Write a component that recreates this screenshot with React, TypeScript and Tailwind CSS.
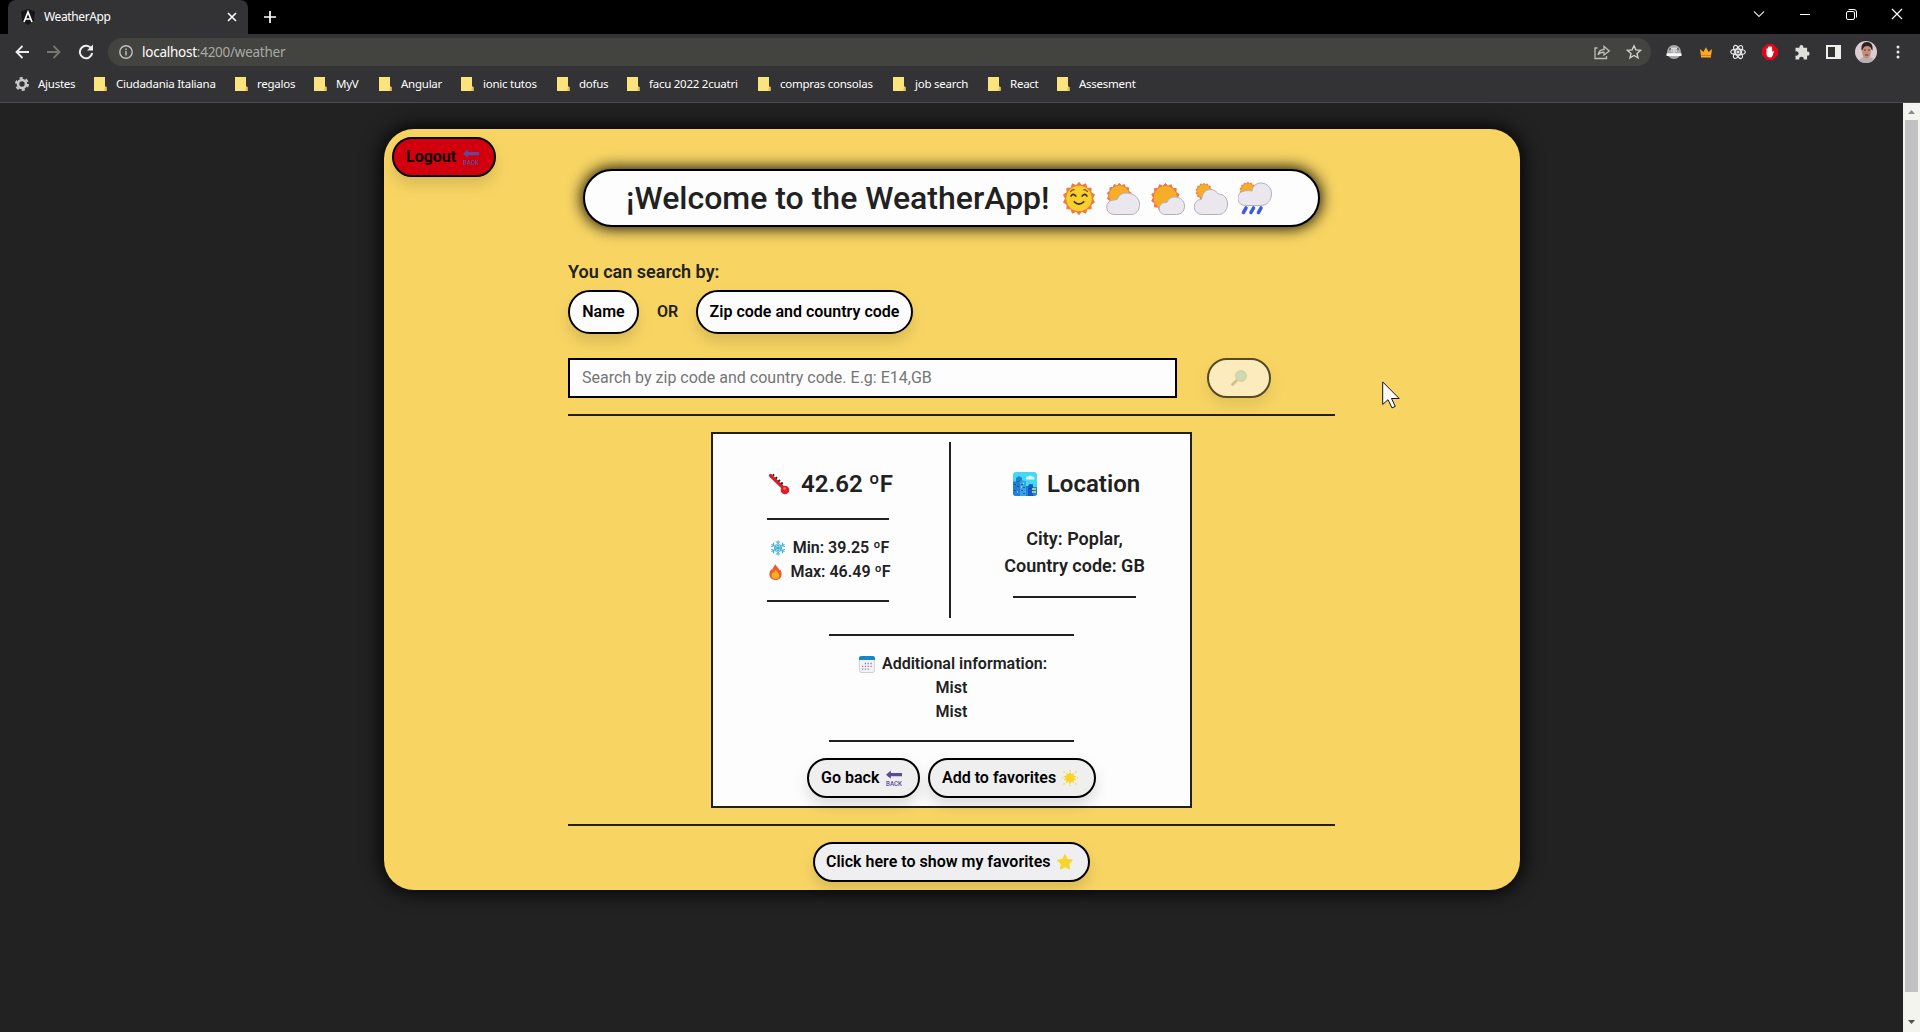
import React from "react";
import type { ReactNode } from "react";

const bookmarks = [
  { name: "Ciudadania Italiana", w: "w-[141px]" },
  { name: "regalos", w: "w-[79px]" },
  { name: "MyV", w: "w-[65px]" },
  { name: "Angular", w: "w-[82px]" },
  { name: "ionic tutos", w: "w-[96px]" },
  { name: "dofus", w: "w-[70px]" },
  { name: "facu 2022 2cuatri", w: "w-[131px]" },
  { name: "compras consolas", w: "w-[135px]" },
  { name: "job search", w: "w-[95px]" },
  { name: "React", w: "w-[69px]" },
  { name: "Assesment", w: "w-[90px]" },
];

const SUN =
  "M16 1l2.6 3 3.6-1.7 1.2 3.8 4 .2-.3 4 3.3 2.2-1.8 3.5 1.8 3.5-3.3 2.2.3 4-4 .2-1.2 3.8-3.6-1.7-2.6 3-2.6-3-3.6 1.7-1.2-3.8-4-.2.3-4L1.600 19.500 3.400 16 1.600 12.500l3.300-2.200-.3-4 4-.2 1.200-3.800L13.400 4z";

function SmilingSun() {
  return (
    <svg viewBox="1 .5 30 31" className="h-[33px] w-[32px]">
      <path d={SUN} fill="#f07a3c" stroke="#f07a3c" strokeLinejoin="round" />
      <circle cx="16" cy="16" r="12" fill="#f8cf2c" />
      <path d="M8.500 13.700q2-3.200 4.500 0M19 13.700q2.500-3.200 4.500 0M11.500 19q4.500 4.500 9 0" fill="none" stroke="#3a2a20" strokeWidth="1.500" strokeLinecap="round" />
      <path d="M8 9.500q1.500-2 3.500-1.800M24 9.500q-1.500-2-3.500-1.800" fill="none" stroke="#7d5518" strokeWidth="1.100" strokeLinecap="round" />
    </svg>
  );
}

function SunCloud({ sun, cloud }: { sun: string; cloud: string }) {
  return (
    <svg viewBox="0 0 34 34" className="h-[34px] w-[34px]">
      <g transform={sun}>
        <path d={SUN} fill="#ec7440" stroke="#ec7440" strokeLinejoin="round" />
        <circle cx="16" cy="16" r="12.300" fill="#f6ae28" />
      </g>
      <path d={cloud} fill="#ebe7ee" stroke="#b5afb8" strokeWidth="1" />
    </svg>
  );
}

function RainCloud() {
  return (
    <svg viewBox="0 0 34 34" className="h-[34px] w-[34px]">
      <g transform="translate(1 .5) scale(.56)">
        <path d={SUN} fill="#ec7440" stroke="#ec7440" strokeLinejoin="round" />
        <circle cx="16" cy="16" r="12.300" fill="#f6ae28" />
      </g>
      <path d="M7.500 24.500a6.500 6.500 0 0 1-1-14.500q4-1 7.500 0C14.500 5.500 18 2 22.800 2c6 0 10.700 4.500 10.700 10.500 0 7-4.700 12-10.700 12z" fill="#ebe7ee" stroke="#b5afb8" />
      <path d="M8 27l-2.500 4.500M15.500 27L13 31.500M23 27l-2.500 4.500" stroke="#3d5ae4" strokeWidth="3.600" strokeLinecap="round" />
    </svg>
  );
}

function BackArrow() {
  return (
    <svg viewBox="0 0 16 16" className="size-4 overflow-visible">
      <path d="M0 4.700L4.800.6v2.500H16v3.200H4.800V8.800z" fill="#5b4b9a" />
      <text x="0" y="15.500" fontSize="6.500" textLength="16" lengthAdjust="spacingAndGlyphs" fontFamily="Roboto" fontWeight="500" fill="#5b4b9a">
        BACK
      </text>
    </svg>
  );
}

function Glyph({ kind }: { kind: string }) {
  switch (kind) {
    case "thermometer":
      return (
        <svg viewBox="0 0 22 22" className="h-[22px] w-[22px]">
          <path d="M2.500 2.500L15.500 15" stroke="#d81f2c" strokeWidth="3.400" strokeLinecap="round" />
          <circle cx="17" cy="17" r="4.300" fill="#e01d2b" />
          <circle cx="16.500" cy="15.500" r="1.300" fill="#f77b7f" />
          <path d="M4.800 2.700l1.300-1.300M7.700 5.500l1.300-1.300M10.500 8.300l1.500-1.500M13.200 11l1.500-1.500" stroke="#272020" strokeWidth="1.800" />
        </svg>
      );
    case "city":
      return (
        <svg viewBox="0 0 24 24" className="size-6">
          <rect width="24" height="24" rx="3" fill="#43d8f5" />
          <path d="M13 6.500q0-2.500 2.500-2 1.500-2 3.500 0 3 0 2.500 3H13z" fill="#dff4fb" />
          <path d="M0 9.500h3V6l3-2 3 2v4h2l2-1v5h3v-2h4v3h4v6q0 3-3 3H3q-3 0-3-3z" fill="#1e80d6" />
          <path d="M7 10l3-2 3 2v14H7z" fill="#3aa2ea" />
          <path d="M15 14l2-2 3 2v10h-5z" fill="#1558c4" />
          <path d="M2 12v1M5 9v1M5 14v1M9 12v1M11 15v1M9 18v1M2 18v1M11 21v1M17 16v1" stroke="#123763" strokeWidth="1.300" />
          <path d="M19 17h4M19 20h4M8 15h1M10 11.500h1M4 20h1" stroke="#d8e86a" strokeWidth="1.400" />
        </svg>
      );
    case "snow":
      return (
        <svg viewBox="0 0 16 16" className="size-4" fill="none" stroke="#3aabd4" strokeWidth="1" strokeLinecap="round">
          {[0, 60, 120, 180, 240, 300].map((a) => (
            <path key={a} transform={`rotate(${a} 8 8)`} d="M8 8V.8M6 1.600L8 3.400l2-1.800M6.600 4.600L8 5.900l1.400-1.300" />
          ))}
        </svg>
      );
    case "fire":
      return (
        <svg viewBox="0 0 13 16" className="h-4 w-[13px]">
          <path d="M6.500.2C7.600 3 9.600 3.600 10.400 6.200l.6-.8C12.300 7 12.800 8.600 12.600 10.700 12.200 14 9.800 16 6.500 16S.5 13.800.4 10.500C.3 8.200 1.200 6.600 2.400 5.200l.7 1C3.500 4 4.900 2.400 6.500.2z" fill="#e5602d" />
          <path d="M6.700 5.800c.6 1.800 3.800 3.500 3.700 6-.2 2.100-1.900 3.300-4 3.300s-3.900-1.200-3.900-3.500c0-1.700 1-2.800 1.800-3.600l.9 1.300c.1-1.500.6-2.700 1.500-3.500z" fill="#fbab25" />
        </svg>
      );
    case "calendar":
      return (
        <svg viewBox="0 0 16 17" className="h-[17px] w-4">
          <rect x=".4" y=".5" width="15.200" height="16" rx="2" fill="#f3f0f6" stroke="#c9c3d2" strokeWidth=".8" />
          <path d="M0 4V2.200Q0 0 2.200 0h11.600Q16 0 16 2.200V4z" fill="#1787cc" />
          <path d="M5.800 7.500H14M3 10.300h11M3 13.100h7" stroke="#8f87a0" strokeWidth="1.300" strokeDasharray="1.300 1.500" />
        </svg>
      );
    case "sparkle":
      return (
        <svg viewBox="0 0 16 16" className="size-4">
          <path d="M8 1.500l1.300 2.700 2.700-1.400-.6 2.800 3.100.6L12.200 8l2.300 1.800-3.100.6.6 2.800-2.700-1.400L8 14.500l-1.300-2.700L4 13.200l.6-2.800-3.100-.6L3.800 8 1.500 6.200l3.100-.6L4 2.800l2.700 1.400z" fill="#fad528" />
          <path d="M8 0v1.200M8 14.800V16M0 8h1.200M14.800 8H16M1.500 1.500l1.200 1.200M13.300 13.300l1.200 1.200M14.500 1.500l-1.200 1.200M2.700 13.300l-1.200 1.200" stroke="#f8d84a" strokeWidth="1.500" />
        </svg>
      );
    case "star":
      return (
        <svg viewBox="0 0 16 16" className="size-4">
          <path d="M8 1.200l2.100 4.400 4.800.6-3.500 3.400.9 4.900L8 12.200l-4.300 2.300.9-4.900L1.100 6.200l4.800-.6z" fill="#f8d52c" stroke="#f8d52c" strokeWidth="1.600" strokeLinejoin="round" />
        </svg>
      );
    default:
      return (
        <svg viewBox="0 0 16 16" className="size-4">
          <path d="M5.500 10.500L1.500 14.500" stroke="#7c7060" strokeWidth="2.800" strokeLinecap="round" />
          <circle cx="10" cy="6" r="5.300" fill="#78c5d2" stroke="#82a89c" strokeWidth="1.300" />
        </svg>
      );
  }
}

function Pill({ className, children }: { className: string; children: ReactNode }) {
  return (
    <button
      className={`flex shrink-0 items-center whitespace-nowrap border-2 border-black text-[16px] font-semibold text-black shadow-[0_8px_15px_rgba(0,0,0,0.13)] ${className}`}
    >
      {children}
    </button>
  );
}

function Rule({ className }: { className: string }) {
  return <div className={`h-[2px] shrink-0 bg-[#212121] ${className}`} />;
}

function TabStrip() {
  return (
    <div className="flex h-[34px] bg-black">
      <div className="ml-[8px] flex h-full w-[240px] items-center rounded-t-[8px] bg-[#333336] pl-[12px] pr-[11px]">
        <svg viewBox="0 0 16 16" className="size-4">
          <path d="M8 0l7 2.500L14 12l-6 4-6-4L1 2.500z" fill="#15151b" />
          <path d="M4 13L8 3l4 10M5.600 10h4.800" fill="none" stroke="#fff" strokeWidth="1.700" />
        </svg>
        <span className="ml-[8px] text-[12px] tracking-[-0.37px] text-white">WeatherApp</span>
        <svg viewBox="0 0 10 10" className="ml-auto size-[10px]" stroke="#fff" strokeWidth="1.600">
          <path d="M1 1l8 8M9 1L1 9" />
        </svg>
      </div>
      <svg viewBox="0 0 12 12" className="ml-[16px] mt-[11px] size-3" stroke="#fff" strokeWidth="1.700">
        <path d="M6 0v12M0 6h12" />
      </svg>
      <div className="ml-auto flex h-[28px] items-center">
        <svg viewBox="0 0 12 8" className="mr-[35px] h-2 w-3" fill="none" stroke="#ddd" strokeWidth="1.100">
          <path d="M1 1.500l5 5 5-5" />
        </svg>
        <div className="mr-[36px] h-px w-[10px] bg-white" />
        <svg viewBox="0 0 11 11" className="mr-[34px] size-[11px]" fill="none" stroke="#fff">
          <rect x=".5" y="2.500" width="8" height="8" rx="1.500" />
          <path d="M2.500.5H8q2.500 0 2.500 2.500v5.500" />
        </svg>
        <svg viewBox="0 0 12 12" className="mr-[17px] size-[12px]" stroke="#fff" strokeWidth="1.200">
          <path d="M1 1l10 10M11 1L1 11" />
        </svg>
      </div>
    </div>
  );
}

function AddressBar() {
  return (
    <div className="flex h-[35px] items-center pt-px">
      <svg viewBox="0 0 14 14" className="ml-[15px] size-[14px]" fill="none" stroke="#eee" strokeWidth="1.800">
        <path d="M14 7H1.500M7.500 1l-6 6 6 6" />
      </svg>
      <svg viewBox="0 0 14 14" className="ml-[18px] size-[14px]" fill="none" stroke="#77776f" strokeWidth="1.800">
        <path d="M0 7h12.500M6.500 1l6 6-6 6" />
      </svg>
      <svg viewBox="0 0 16 16" className="ml-[17px] size-4" fill="none" stroke="#eee" strokeWidth="2">
        <path d="M13.500 5A6.200 6.200 0 1 0 14.200 9" />
        <path d="M15 .5V6.500H9z" fill="#eee" stroke="none" />
      </svg>
      <div className="ml-[14px] flex h-[28px] w-[1543px] items-center rounded-full bg-[#434340] pl-[11px]">
        <svg viewBox="0 0 14 14" className="size-[14px]" fill="none" stroke="#c2c2c2" strokeWidth="1.400">
          <circle cx="7" cy="7" r="6.200" />
          <path d="M7 6v4.500M7 3.400v1.500" />
        </svg>
        <span className="ml-[9px] text-[13.500px] tracking-[-0.25px] text-[#a9a9a7]">
          <span className="text-white">localhost</span>:4200/weather
        </span>
        <svg viewBox="0 0 16 16" className="ml-auto mr-[16px] size-4" fill="none" stroke="#bdbdbd" strokeWidth="1.300">
          <path d="M3.500 4H1v10.500h11.500V12M4 11q1-5.500 6-5.500V2.500L15.200 7 10 11V8.300Q6 8 4 11z" />
        </svg>
        <svg viewBox="0 0 16 16" className="mr-[9px] size-4" fill="none" stroke="#d0d0d0" strokeWidth="1.400">
          <path d="M8 1.800l1.900 4.100 4.500.5-3.400 3 1 4.400-4-2.300-4 2.300 1-4.400-3.400-3 4.500-.5z" />
        </svg>
      </div>
      <div className="ml-[15px] flex items-center">
        <svg viewBox="0 0 16 16" className="size-4">
          <circle cx="8" cy="8" r="7" fill="#a9a9a9" />
          <path d="M5 4.500h6M8 4v5M5 7h1.500M9.500 7H11" stroke="#dcdcdc" strokeWidth="1.500" />
          <path d="M3.500 6l1-2M12.500 6l-1-2" stroke="#55555a" strokeWidth="1.200" />
          <path d="M.5 9.300h15V12H.5z" fill="#fff" />
        </svg>
        <svg viewBox="0 0 14 12" className="ml-[17px] h-3 w-[14px]">
          <path d="M1 3l3.400 3L7 1.200l2.600 4.800 3.400-3-1.200 8.500H2.200z" fill="#fbac1c" />
          <path d="M2 9.500h10" stroke="#e8762a" />
        </svg>
        <svg viewBox="0 0 16 16" className="ml-[17px] size-4" fill="none" stroke="#e8e8e8" strokeWidth="1.200">
          <ellipse cx="8" cy="8" rx="7.300" ry="2.800" />
          <ellipse cx="8" cy="8" rx="7.300" ry="2.800" transform="rotate(60 8 8)" />
          <ellipse cx="8" cy="8" rx="7.300" ry="2.800" transform="rotate(120 8 8)" />
          <circle cx="8" cy="8" r="1" fill="#fff" />
        </svg>
        <svg viewBox="0 0 16 16" className="ml-[16px] size-4">
          <path d="M5 0h6l5 5v6l-5 5H5l-5-5V5z" fill="#e2061c" />
          <path d="M4.500 8V4.700q.8-.8 1.400 0V3q.8-.8 1.400 0v-.6q.8-.8 1.400 0V3q.8-.8 1.400 0v5l1-1.300q1 0 .7 1L10.500 12Q9.800 13.500 8 13.500q-2.800 0-3.500-3z" fill="#fff" />
        </svg>
        <svg viewBox="0 0 16 16" className="ml-[16px] size-4" fill="#dededc">
          <path d="M1.500 3.700h4a2 2 0 1 1 3.800 0h3.800v4a2 2 0 1 1 0 3.900v3.900H9.600a2.200 2.200 0 1 0-4.300 0H1.500v-4a2.200 2.200 0 1 0 0-4z" />
        </svg>
        <svg viewBox="0 0 15 14" className="ml-[16px] h-[14px] w-[15px]">
          <path d="M0 0h15v14H0zM2 2v10h7V2z" fill="#eeeeea" fillRule="evenodd" />
        </svg>
        <svg viewBox="0 0 22 22" className="ml-[14px] size-[22px] rounded-full">
          <rect width="22" height="22" fill="#d9cdd0" />
          <path d="M3 22q1-5 6-6h6q4 1 5 6z" fill="#b9aeb2" />
          <ellipse cx="11.500" cy="10.500" rx="4.500" ry="7" fill="#c78c79" />
          <path d="M6.500 9.500Q5.500 1 12 1t5.500 8.500l-1.200-1Q16 5 12 5 8.500 5 7.800 8.500z" fill="#2c2022" />
          <path d="M9 9h2M13 9h2M10 14h3.500" stroke="#5a3430" />
        </svg>
        <svg viewBox="0 0 4 14" className="ml-[19px] h-[14px] w-1" fill="#e8e8e8">
          <circle cx="2" cy="2" r="1.500" />
          <circle cx="2" cy="7" r="1.500" />
          <circle cx="2" cy="12" r="1.500" />
        </svg>
      </div>
    </div>
  );
}

function BookmarkBar() {
  return (
    <div className="flex h-[33px] items-center pb-[3px] text-[11.500px] tracking-[-0.250px] text-white">
      <svg viewBox="0 0 14 14" className="ml-[15px] size-[14px]" fill="none">
        <circle cx="7" cy="7" r="4" stroke="#c9c9cc" strokeWidth="2.600" />
        <circle cx="7" cy="7" r="6" stroke="#c9c9cc" strokeWidth="2" strokeDasharray="3.140 3.140" />
      </svg>
      <span className="ml-[9px] w-[56px] whitespace-nowrap">Ajustes</span>
      {bookmarks.map((b) => (
        <div key={b.name} className={`flex shrink-0 items-center whitespace-nowrap ${b.w}`}>
          <svg viewBox="0 0 13 14" className="h-[14px] w-[13px]">
            <path d="M0 0h11v9.500l1.500.5v4H0z" fill="#fbe37d" />
            <path d="M11 9.500l1.500.5v4H10z" fill="#e8c558" />
          </svg>
          <span className="ml-[9px]">{b.name}</span>
        </div>
      ))}
    </div>
  );
}

function WeatherCard() {
  return (
    <section className="ml-[143px] mt-[16px] flex h-[376px] w-[481px] flex-col items-center border-2 border-[#212121] bg-[#fdfdfe] font-semibold text-[#212121]">
      <div className="mt-[8px] flex h-[176px] w-full">
        <div className="flex w-[238px] flex-col items-center border-r-2 border-[#212121] pr-[6px]">
          <h2 className="ml-[5px] mt-[24px] flex h-[36px] items-center gap-[11px] text-[24px] leading-[36px]">
            <Glyph kind="thermometer" />
            42.62 ºF
          </h2>
          <Rule className="mt-[16px] w-[122px]" />
          <p className="ml-[3px] mt-[16px] flex h-[24px] items-center gap-[7px] text-[16px]"><Glyph kind="snow" />Min: 39.25 ºF</p>
          <p className="ml-[4px] flex h-[24px] items-center gap-[8px] text-[16px]"><Glyph kind="fire" />Max: 46.49 ºF</p>
          <Rule className="mt-[16px] w-[122px]" />
        </div>
        <div className="flex flex-1 flex-col items-center pl-[8px]">
          <h2 className="ml-[4px] mt-[24px] flex h-[36px] items-center gap-[10px] text-[24px]">
            <Glyph kind="city" />
            Location
          </h2>
          <p className="mt-[23px] text-center text-[18px] leading-[27px]">City: Poplar,<br />Country code: GB</p>
          <Rule className="mt-[17px] w-[123px]" />
        </div>
      </div>
      <Rule className="mt-[16px] w-[245px]" />
      <div className="mt-[16px] flex flex-col items-center text-[16px] leading-[24px]">
        <p className="ml-[3px] flex h-[24px] items-center gap-[7px]"><Glyph kind="calendar" />Additional information:</p>
        <p>Mist</p>
        <p>Mist</p>
      </div>
      <Rule className="mt-[16px] w-[245px]" />
      <div className="mt-[16px] flex gap-[8px]">
        <Pill className="h-[40px] w-[113px] gap-[7px] rounded-[20px] bg-[#efeff0] pl-[12px]">Go back<BackArrow /></Pill>
        <Pill className="h-[40px] w-[168px] gap-[6px] rounded-[20px] bg-[#efeff0] pl-[12px]">Add to favorites<Glyph kind="sparkle" /></Pill>
      </div>
    </section>
  );
}

function WeatherPanel() {
  return (
    <main className="ml-[384px] mt-[26px] flex h-[761px] w-[1136px] rounded-[30px] bg-[#f8d563] font-['Roboto',sans-serif] text-[#212529] shadow-[0_0_20px_2px_#000]">
      <div className="w-[184px] shrink-0 pl-[8px] pt-[8px]">
        <Pill className="h-[40px] w-[104px] gap-[7px] rounded-[20px] bg-[#d2000f] pl-[12px]">Logout<BackArrow /></Pill>
      </div>
      <div className="flex w-[767px] flex-col">
        <h1 className="ml-[15px] mt-[40px] flex h-[58px] w-[737px] items-center rounded-[30px] border-2 border-black bg-[#fdfdfe] pl-[41px] text-[32px] font-medium text-[#212121] shadow-[0_0_16px_1px_#000]">
          <span className="w-[437px] shrink-0 whitespace-nowrap">¡Welcome to the WeatherApp!</span>
          <div className="flex shrink-0 items-center">
            <SmilingSun />
            <div className="ml-[11px]"><SunCloud sun="translate(0 1.500) scale(.83)" cloud="M8 33.500a7.300 7.300 0 0 1 0-14.600q2 0 3.500-.8C13 14 16 12 20.500 12c7 0 13 4.500 13 11.500 0 6-3.500 10-8.500 10z" /></div>
            <div className="ml-[11px]"><SunCloud sun="translate(-.8 1.500) scale(.95)" cloud="M14 33.500a6 6 0 0 1-5-9q2-3.500 7-3.200C17 18 20 16 24 16c5 0 9.500 3.500 9.500 9s-3.500 8.500-8 8.500z" /></div>
            <div className="ml-[9px]"><SunCloud sun="translate(1 1.500) scale(.56)" cloud="M8 33.500a7.400 7.400 0 0 1-.4-15.200C8 13.500 11 8.500 16 8.500c4.500 0 6.300 2 8.500 4.500 5.500 0 9 4.500 9 10 0 6-4 10.500-9 10.500z" /></div>
            <div className="ml-[10px]"><RainCloud /></div>
          </div>
        </h1>
        <p className="mt-[31px] h-[28px] text-[18px] font-semibold leading-[28px] text-[#212121]">You can search by:</p>
        <div className="mt-[4px] flex items-center">
          <Pill className="h-[44px] w-[71px] justify-center rounded-[22px] bg-[#fdfdfe]">Name</Pill>
          <span className="w-[57px] text-center text-[16px] font-semibold text-[#212121]">OR</span>
          <Pill className="h-[44px] w-[217px] justify-center rounded-[22px] bg-[#fdfdfe]">Zip code and country code</Pill>
        </div>
        <div className="mt-[24px] flex">
          <input
            className="h-[40px] w-[609px] border-2 border-black bg-[#fdfdfe] px-[12px] pb-[2px] text-[16px] placeholder:text-[#757575]"
            placeholder="Search by zip code and country code. E.g: E14,GB"
          />
          <Pill className="ml-[30px] h-[40px] w-[64px] justify-center rounded-[20px] bg-[#fff8ee] opacity-65"><span className="opacity-50"><Glyph kind="search" /></span></Pill>
        </div>
        <Rule className="mt-[16px] w-[767px]" />
        <WeatherCard />
        <Rule className="mt-[16px] w-[767px]" />
        <div className="mt-[16px] flex justify-center">
          <Pill className="h-[40px] w-[277px] gap-[6px] rounded-[20px] bg-[#efeff2] pl-[11px]">Click here to show my favorites<Glyph kind="star" /></Pill>
        </div>
      </div>
    </main>
  );
}

export default function App() {
  return (
    <div className="relative flex h-[1032px] w-[1920px] flex-col overflow-hidden bg-[#222222] font-['Noto_Sans','Open_Sans',sans-serif]">
      <header className="h-[103px] shrink-0 border-b border-[#4b4b55] bg-[#333336]">
        <TabStrip />
        <AddressBar />
        <BookmarkBar />
      </header>
      <div className="flex min-h-0 flex-1">
        <div className="flex-1"><WeatherPanel /></div>
        <div className="flex w-[17px] flex-col items-center bg-[#f4f4ee]">
          <svg viewBox="0 0 17 17" className="size-[17px]"><path d="M5 11h7L8.500 7z" fill="#8c8c8c" /></svg>
          <div className="h-[872px] w-[13px] bg-[#c1c1c1]" />
          <svg viewBox="0 0 17 17" className="mb-px mt-auto size-[17px]"><path d="M5 6h7l-3.500 4z" fill="#505050" /></svg>
        </div>
      </div>
      <svg viewBox="0 0 19 28" className="absolute left-[1382px] top-[381px] h-[28px] w-[19px]">
        <path d="M.7.900V23.500l5.300-4.800 4 8.200 3.300-1.500-3.800-7.900h7.700z" fill="#fff" stroke="#111" />
      </svg>
    </div>
  );
}
